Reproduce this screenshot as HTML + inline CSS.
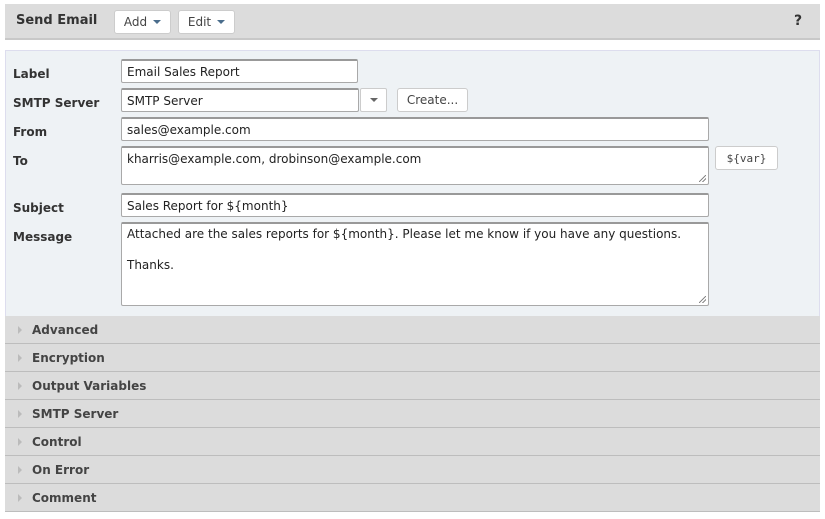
<!DOCTYPE html>
<html><head><style>
*{box-sizing:border-box;margin:0;padding:0}
body{width:825px;height:519px;background:#fff;font-family:"DejaVu Sans",Verdana,sans-serif;font-size:12px;color:#222;position:relative;overflow:hidden}
.a{position:absolute}
.hdr{left:5px;top:4px;width:815px;height:36px;background:#dcdcdc;border-bottom:2px solid #c8c8c8}
.btn{position:absolute;background:#fff;border:1px solid #ccc;border-radius:3px;font-size:12px;color:#444;display:flex;align-items:center;justify-content:center}
.tri{display:inline-block;width:0;height:0;border-left:4px solid transparent;border-right:4px solid transparent;border-top:4px solid #4a6d8c;margin-left:6px}
.panel{left:5px;top:50px;width:815px;height:267px;background:#eef2f5;border:1px solid #dde}
.lbl{position:absolute;left:13px;font-weight:bold;font-size:12px;color:#333}
.in{position:absolute;background:#fff;border:1px solid #a9a9a9;border-top:2px solid #999;border-radius:2px;padding:3px 5px;font-size:12px;color:#222;line-height:16px;white-space:nowrap}
.sec{position:absolute;left:5px;width:815px;height:28px;background:#dcdcdc;border-bottom:1px solid #bdbdbd;font-weight:bold;font-size:12px;color:#444;padding-left:27px;line-height:28px}
.sec:before{content:"";position:absolute;left:13px;top:10px;border-top:4px solid transparent;border-bottom:4px solid transparent;border-left:4px solid #bbb}
.rs{position:absolute;right:2px;bottom:2px;width:7px;height:7px;background:linear-gradient(135deg,transparent 45%,#888 45%,#888 55%,transparent 55%,transparent 70%,#888 70%,#888 80%,transparent 80%)}
</style></head><body>
<div class="a hdr"></div>
<div class="a" style="left:16px;top:13px;font-weight:bold;font-size:13px;color:#333">Send Email</div>
<div class="btn" style="left:114px;top:10px;width:57px;height:24px">Add<span class="tri"></span></div>
<div class="btn" style="left:178px;top:10px;width:57px;height:24px">Edit<span class="tri"></span></div>
<div class="a" style="left:794px;top:13px;font-weight:bold;font-size:14px;color:#333">?</div>
<div class="a panel"></div>
<div class="lbl" style="top:67px">Label</div>
<div class="lbl" style="top:96px">SMTP Server</div>
<div class="lbl" style="top:125px">From</div>
<div class="lbl" style="top:154px">To</div>
<div class="lbl" style="top:201px">Subject</div>
<div class="lbl" style="top:230px">Message</div>
<div class="in" style="left:121px;top:59px;width:237px;height:24px">Email Sales Report</div>
<div class="in" style="left:121px;top:88px;width:238px;height:24px">SMTP Server</div>
<div class="btn" style="left:360px;top:88px;width:27px;height:24px;border-radius:2px"><span class="tri" style="margin:0;border-top-color:#666"></span></div>
<div class="btn" style="left:397px;top:88px;width:71px;height:24px">Create...</div>
<div class="in" style="left:121px;top:117px;width:588px;height:24px">sales@example.com</div>
<div class="in" style="left:121px;top:146px;width:588px;height:39px">kharris@example.com, drobinson@example.com<div class="rs"></div></div>
<div class="btn" style="left:715px;top:146px;width:63px;height:24px;font-family:'DejaVu Sans Mono',monospace;font-size:11px">${var}</div>
<div class="in" style="left:121px;top:193px;width:588px;height:24px">Sales Report for ${month}</div>
<div class="in" style="left:121px;top:222px;width:588px;height:84px;padding-top:3px;line-height:15.5px;font-size:12px">Attached are the sales reports for ${month}. Please let me know if you have any questions.<br><br>Thanks.<div class="rs"></div></div>
<div class="sec" style="top:316px">Advanced</div>
<div class="sec" style="top:344px">Encryption</div>
<div class="sec" style="top:372px">Output Variables</div>
<div class="sec" style="top:400px">SMTP Server</div>
<div class="sec" style="top:428px">Control</div>
<div class="sec" style="top:456px">On Error</div>
<div class="sec" style="top:484px">Comment</div>
</body></html>
